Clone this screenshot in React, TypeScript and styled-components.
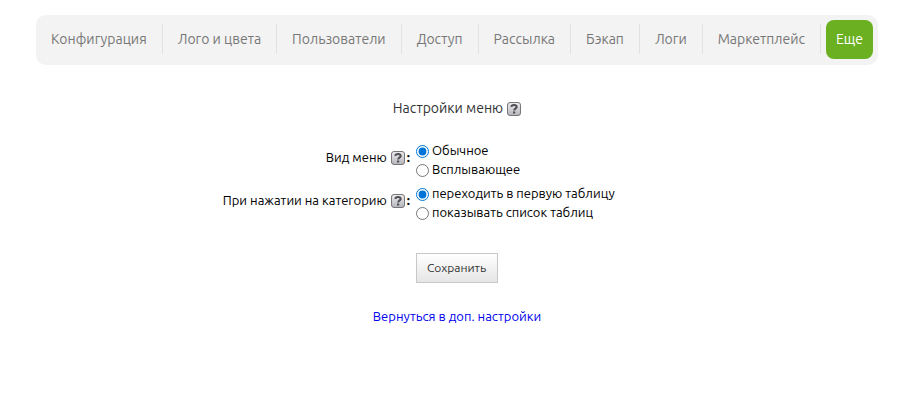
import React from "react";
import styled, { createGlobalStyle } from "styled-components";

const GlobalStyle = createGlobalStyle`
  * { box-sizing: border-box; }
  body {
    margin: 0;
    background: #fff;
    color: #000;
    font-family: Ubuntu, "Noto Sans", "Open Sans", sans-serif;
    font-size: 13px;
    line-height: 19px;
  }
`;

const Page = styled.div`
  padding: 15px 33px 15px 36px;
`;

const Nav = styled.nav`
  display: flex;
  align-items: center;
  height: 50px;
  padding: 0 5px 2px 0;
  background: #f3f3f3;
  border-radius: 10px;
  font-size: 14px;
`;

const NavLink = styled.a`
  flex: 1 1 auto;
  height: 30px;
  border-right: 1px solid #e2e2e2;
  color: #777;
  line-height: 30px;
  text-align: center;
  text-decoration: none;
  white-space: nowrap;
`;

const ActiveLink = styled.a`
  height: 39px;
  margin-left: 5px;
  padding: 0 10px;
  border-radius: 8px;
  background: #6ab020;
  color: #fff;
  line-height: 39px;
  text-decoration: none;
`;

const Title = styled.h1`
  display: flex;
  align-items: center;
  justify-content: center;
  gap: 4px;
  margin: 33px 0 0;
  color: #333;
  font-size: 14px;
  font-weight: 400;
  line-height: 20px;
`;

const Form = styled.form`
  display: grid;
  grid-template-columns: 45fr 55fr;
  column-gap: 2px;
  row-gap: 5px;
  margin-top: 23px;
`;

const Group = styled.div`
  display: grid;
  grid-column: 1 / -1;
  grid-template-columns: subgrid;
  align-items: center;
`;

const GroupLabel = styled.div`
  display: flex;
  align-items: center;
  justify-content: flex-end;
  gap: 4px;
  padding: 0 4px 6px 0;
`;

const LabelEnd = styled.span`
  display: flex;
  align-items: center;
  gap: 2px;
  font-weight: 700;
`;

const Option = styled.label`
  display: flex;
  align-items: center;
  gap: 3px;
`;

const Radio = styled.input`
  width: 13px;
  height: 13px;
  margin: 2px 0 0;
  accent-color: #0075d7;
`;

const SaveButton = styled.button`
  grid-column: 2;
  justify-self: start;
  height: 30px;
  margin-top: 26px;
  padding: 0 11px 2px 10px;
  border: 1px solid #c8c8c8;
  background: linear-gradient(#fff, #e5e5e5);
  color: #333;
  font-family: inherit;
  font-size: 12px;
`;

const Footer = styled.div`
  margin-top: 24px;
  text-align: center;
`;

const BackLink = styled.a`
  color: #0000ee;
  text-decoration: none;
`;

const HelpSvg = styled.svg`
  display: block;
  flex: none;
  margin-top: 1px;
`;

function HelpIcon() {
  return (
    <HelpSvg width="14" height="14" viewBox="0 0 14 14" role="img" aria-label="Справка">
      <defs>
        <linearGradient id="help-fill" x1="0" y1="0" x2="0" y2="1">
          <stop offset="0" stopColor="#ededef" />
          <stop offset="1" stopColor="#b4b5bb" />
        </linearGradient>
      </defs>
      <rect x="0.5" y="0.5" width="13" height="13" rx="2.5" fill="url(#help-fill)" stroke="#77777b" />
      <path d="M4.3 4.9C4.5 3.5 5.6 3 7 3c1.6 0 2.7.6 2.7 1.9C9.7 6.4 7.2 6.5 7.2 8.5" fill="none" stroke="#505054" strokeWidth="2" />
      <rect x="6" y="9.5" width="2.2" height="2" fill="#505054" />
    </HelpSvg>
  );
}

const sections = ["Конфигурация", "Лого и цвета", "Пользователи", "Доступ", "Рассылка", "Бэкап", "Логи", "Маркетплейс"];

const groups = [
  { name: "view", label: "Вид меню", options: ["Обычное", "Всплывающее"] },
  { name: "click", label: "При нажатии на категорию", options: ["переходить в первую таблицу", "показывать список таблиц"] },
];

export default function App() {
  return (
    <Page>
      <GlobalStyle />
      <Nav>
        {sections.map((name) => (
          <NavLink href="#" key={name}>{name}</NavLink>
        ))}
        <ActiveLink href="#" aria-current="page">Еще</ActiveLink>
      </Nav>
      <main>
        <Title>Настройки меню <HelpIcon /></Title>
        <Form onSubmit={(e) => e.preventDefault()}>
          {groups.map((group) => (
            <Group key={group.name} role="radiogroup" aria-labelledby={group.name + "-label"}>
              <GroupLabel>
                <span id={group.name + "-label"}>{group.label}</span>
                <LabelEnd><HelpIcon />:</LabelEnd>
              </GroupLabel>
              <div>
                {group.options.map((option, i) => (
                  <Option key={option}>
                    <Radio type="radio" name={group.name} defaultChecked={i === 0} />
                    {option}
                  </Option>
                ))}
              </div>
            </Group>
          ))}
          <SaveButton type="submit">Сохранить</SaveButton>
        </Form>
        <Footer><BackLink href="#">Вернуться в доп. настройки</BackLink></Footer>
      </main>
    </Page>
  );
}
